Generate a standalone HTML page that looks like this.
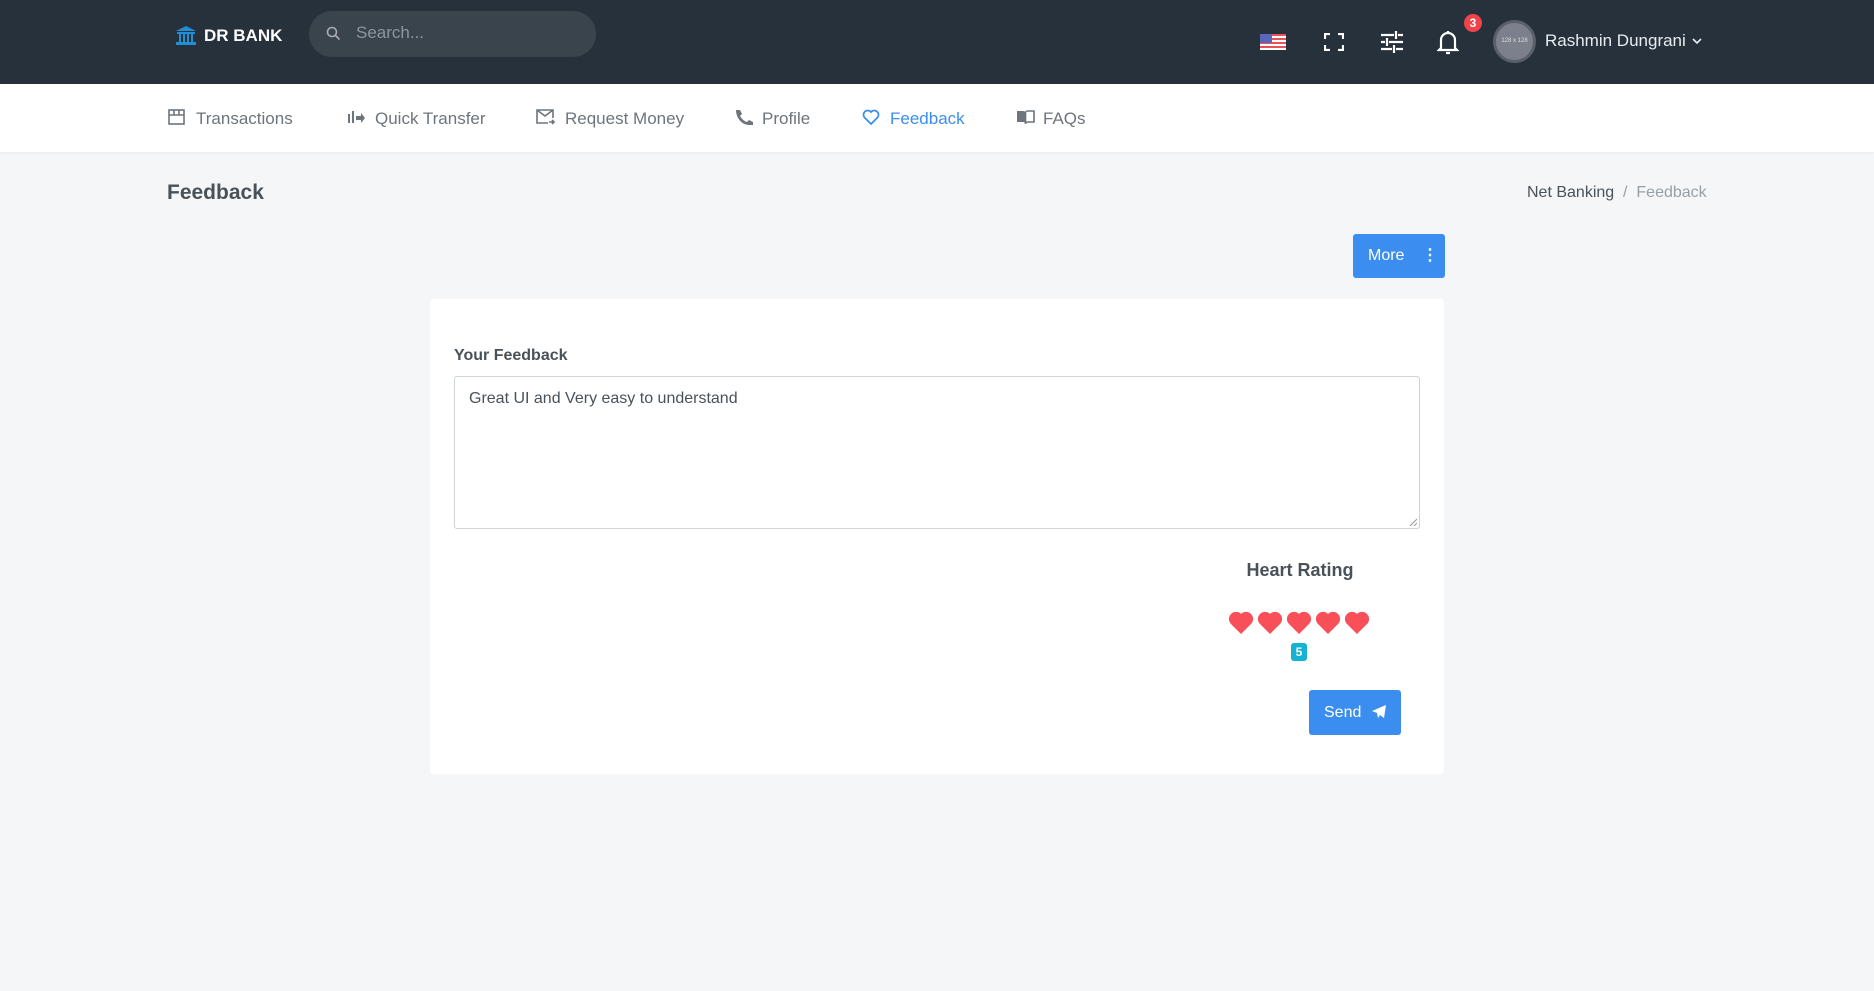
<!DOCTYPE html>
<html><head><meta charset="utf-8"><style>
*{box-sizing:border-box;margin:0;padding:0}
body{width:1874px;height:991px;background:#f4f6f7;font-family:"Liberation Sans",sans-serif;color:#4a5259;position:relative;overflow:hidden}
.abs{position:absolute}
.top{left:0;top:0;width:1874px;height:84px;background:#26313b}
.nav{left:0;top:84px;width:1874px;height:68px;background:#fff;box-shadow:0 1px 3px rgba(0,0,0,.06)}
.ni{position:absolute;top:109px;font-size:17px;color:#6c757d;line-height:20px}
.ic{position:absolute;top:109px}
</style></head><body>
<div class="abs top"></div>
<svg class="abs" style="left:175px;top:26px" width="22" height="19" viewBox="0 0 22 19"><path d="M11 0L1 5h20z" fill="#1f8fd6"/><rect x="2" y="6" width="18" height="2" fill="#1f8fd6"/><rect x="4" y="8" width="2" height="8" fill="#1f8fd6"/><rect x="8" y="8" width="2" height="8" fill="#1f8fd6"/><rect x="12" y="8" width="2" height="8" fill="#1f8fd6"/><rect x="16" y="8" width="2" height="8" fill="#1f8fd6"/><rect x="1" y="16" width="20" height="3" fill="#1f8fd6"/></svg>
<div class="abs" style="left:204px;top:26px;color:#fff;font-weight:bold;font-size:17px">DR BANK</div>
<div class="abs" style="left:309px;top:11px;width:287px;height:46px;border-radius:23px;background:#3a444d"></div>
<svg class="abs" style="left:326px;top:26px" width="15" height="15" viewBox="0 0 15 15"><circle cx="6" cy="6" r="4.5" stroke="#aab" stroke-width="1.6" fill="none"/><path d="M9.5 9.5L13.5 13.5" stroke="#aab" stroke-width="1.6"/></svg>
<div class="abs" style="left:356px;top:23px;color:#8d969e;font-size:17px">Search...</div>
<svg class="abs" style="left:1260px;top:34px" width="26" height="16" viewBox="0 0 26 16"><rect width="26" height="16" fill="#fff"/><g fill="#e8505b"><rect y="0" width="26" height="2"/><rect y="4" width="26" height="2"/><rect y="8" width="26" height="2"/><rect y="12" width="26" height="2"/></g><rect width="12" height="9" fill="#5a66b8"/></svg>
<svg class="abs" style="left:1324px;top:33px" width="20" height="18" viewBox="0 0 20 18" fill="none" stroke="#fff" stroke-width="2.2"><path d="M1 6V1h5M14 1h5v5M19 12v5h-5M6 17H1v-5"/></svg>
<svg class="abs" style="left:1380px;top:31px" width="24" height="22" viewBox="0 0 24 22" stroke="#fff" stroke-width="2.2"><path d="M1 4h13M18 4h5M16 0v8M1 11h4M9 11h14M7 7v8M1 18h11M16 18h7M14 14v8"/></svg>
<svg class="abs" style="left:1437px;top:30px" width="22" height="25" viewBox="0 0 22 25" fill="none" stroke="#fff" stroke-width="2.2"><path d="M4 18V10a7 7 0 0 1 14 0v8l2 2H2z"/><path d="M9 23h4"/><path d="M11 1v2"/></svg>
<div class="abs" style="left:1464px;top:14px;width:18px;height:18px;border-radius:9px;background:#f0434c;color:#fff;font-size:12px;font-weight:bold;text-align:center;line-height:18px">3</div>
<div class="abs" style="left:1493px;top:20px;width:43px;height:43px;border-radius:50%;background:#7c808c;border:3px solid #5a606a;color:#ddd;font-size:6px;text-align:center;line-height:37px">128 x 128</div>
<div class="abs" style="left:1545px;top:31px;color:#e8ecef;font-size:17px">Rashmin Dungrani</div>
<svg class="abs" style="left:1692px;top:38px" width="10" height="7" viewBox="0 0 10 7"><path d="M1 1l4 4 4-4" stroke="#e8ecef" stroke-width="1.6" fill="none"/></svg>

<div class="abs nav"></div>
<svg class="ic" style="left:168px" width="17" height="16" viewBox="0 0 17 16" fill="none" stroke="#6c757d" stroke-width="1.6"><rect x="1" y="1" width="15" height="14"/><path d="M1 6h15M6 1v5M11 1v5"/></svg>
<div class="ni" style="left:196px">Transactions</div>
<svg class="ic" style="left:347px" width="18" height="16" viewBox="0 0 18 16" fill="#6c757d"><rect x="1" y="5" width="2" height="9"/><rect x="5" y="2" width="2" height="12"/><path d="M9 7h5V4l4 5-4 5v-3H9z"/></svg>
<div class="ni" style="left:375px">Quick Transfer</div>
<svg class="ic" style="left:536px" width="19" height="17" viewBox="0 0 19 17" fill="none" stroke="#6c757d" stroke-width="1.6"><path d="M12 14H1V1h16v8"/><path d="M1 1l8 6 8-6"/><path d="M13 13h5M16 11l2 2-2 2"/></svg>
<div class="ni" style="left:565px">Request Money</div>
<svg class="ic" style="left:735px" width="18" height="16" viewBox="0 0 18 16" fill="#6c757d"><path d="M1 1h4l2 4-2 2c2 3 4 5 7 6l2-2 4 2v3H14C7 16 1 9 1 1z"/></svg>
<div class="ni" style="left:762px">Profile</div>
<svg class="ic" style="left:862px" width="18" height="16" viewBox="0 0 18 16" fill="none" stroke="#3b8ef0" stroke-width="1.8"><path d="M9 15L2.5 8.5A4 4 0 0 1 9 3a4 4 0 0 1 6.5 5.5z"/></svg>
<div class="ni" style="left:890px;color:#3b8ef0">Feedback</div>
<svg class="ic" style="left:1016px" width="19" height="16" viewBox="0 0 19 16" fill="#6c757d"><path d="M1 2h6c1.5 0 2.5 1 2.5 2v11c0-1-1-2-2.5-2H1z"/><path d="M18 2h-6c-1.5 0-2.5 1-2.5 2v11c0-1 1-2 2.5-2H18z" fill="none" stroke="#6c757d" stroke-width="1.6"/></svg>
<div class="ni" style="left:1043px">FAQs</div>

<div class="abs" style="left:167px;top:181px;font-size:21px;font-weight:bold;color:#4a5259">Feedback</div>
<div class="abs" style="left:1527px;top:184px;font-size:16px;color:#4a5259">Net Banking <span style="color:#98a0a6">&nbsp;/&nbsp; Feedback</span></div>
<div class="abs" style="left:1353px;top:234px;width:92px;height:44px;background:#3b8ef0;border-radius:3px;color:#fff;font-size:16px;line-height:44px;padding-left:15px">More<span style="position:absolute;left:69px;top:0;font-weight:bold">&#8942;</span></div>

<div class="abs" style="left:430px;top:299px;width:1014px;height:475px;background:#fff;border-radius:3px"></div>
<div class="abs" style="left:454px;top:347px;font-size:16px;font-weight:bold;color:#4a5259">Your Feedback</div>
<div class="abs" style="left:454px;top:376px;width:966px;height:153px;border:1px solid #ced4da;border-radius:3px"></div>
<div class="abs" style="left:469px;top:390px;font-size:16px;color:#4a5259">Great UI and Very easy to understand</div>
<svg class="abs" style="left:1409px;top:518px" width="8" height="8"><path d="M1 8L8 1M5 8L8 5" stroke="#999"/></svg>
<div class="abs" style="left:1200px;top:560px;width:200px;text-align:center;font-size:18px;font-weight:bold;color:#4a5259">Heart Rating</div>
<svg class="abs" style="left:1229px;top:610px" width="142" height="25" viewBox="0 0 142 25" fill="#f94f58">
<g id="h"><path d="M12 24L2 14A6.5 6.5 0 0 1 12 4a6.5 6.5 0 0 1 10 10z"/></g>
<use href="#h" x="29"/><use href="#h" x="58"/><use href="#h" x="87"/><use href="#h" x="116"/></svg>
<div class="abs" style="left:1291px;top:643px;width:16px;height:18px;border-radius:3px;background:#14b3d4;color:#fff;font-size:12px;font-weight:bold;text-align:center;line-height:18px">5</div>
<div class="abs" style="left:1309px;top:690px;width:92px;height:45px;background:#3b8ef0;border-radius:3px;color:#fff;font-size:16px;line-height:45px;padding-left:15px">Send</div>
<svg class="abs" style="left:1371px;top:704px" width="16" height="16" viewBox="0 0 16 16" fill="#fff"><path d="M15 1L1 7l5 2 1 5 2-3 4 3z"/></svg>
</body></html>
